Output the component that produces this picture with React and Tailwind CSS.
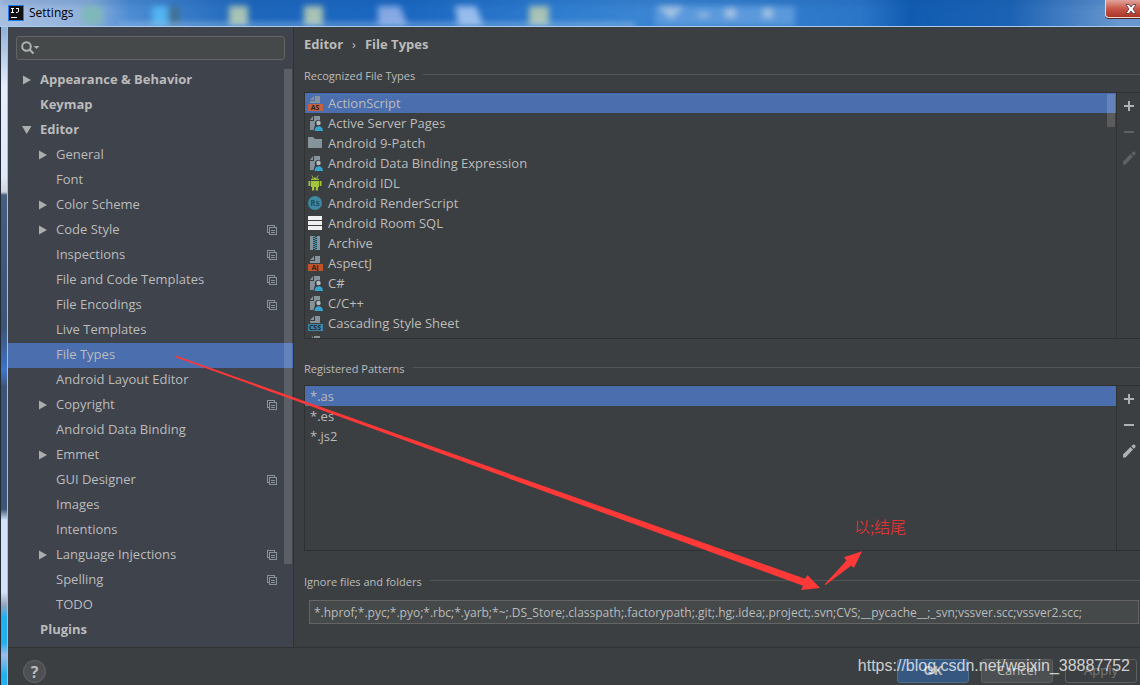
import React from 'react';

const navItems = [
    { label: 'Appearance & Behavior', top: true, arrow: 'right' },
    { label: 'Keymap', top: true },
    { label: 'Editor', top: true, arrow: 'down' },
    { label: 'General', arrow: 'right' },
    { label: 'Font' },
    { label: 'Color Scheme', arrow: 'right' },
    { label: 'Code Style', arrow: 'right', project: true },
    { label: 'Inspections', project: true },
    { label: 'File and Code Templates', project: true },
    { label: 'File Encodings', project: true },
    { label: 'Live Templates' },
    { label: 'File Types', selected: true },
    { label: 'Android Layout Editor' },
    { label: 'Copyright', arrow: 'right', project: true },
    { label: 'Android Data Binding' },
    { label: 'Emmet', arrow: 'right' },
    { label: 'GUI Designer', project: true },
    { label: 'Images' },
    { label: 'Intentions' },
    { label: 'Language Injections', arrow: 'right', project: true },
    { label: 'Spelling', project: true },
    { label: 'TODO' },
    { label: 'Plugins', top: true },
];

const fileTypes = [
    { name: 'ActionScript', icon: 'tag', tag: 'AS', color: '#c4623f' },
    { name: 'Active Server Pages', icon: 'user' },
    { name: 'Android 9-Patch', icon: 'folder' },
    { name: 'Android Data Binding Expression', icon: 'user' },
    { name: 'Android IDL', icon: 'android' },
    { name: 'Android RenderScript', icon: 'rs' },
    { name: 'Android Room SQL', icon: 'sql' },
    { name: 'Archive', icon: 'archive' },
    { name: 'AspectJ', icon: 'tag', tag: 'AJ', color: '#be5427' },
    { name: 'C#', icon: 'user' },
    { name: 'C/C++', icon: 'user' },
    { name: 'Cascading Style Sheet', icon: 'tag', tag: 'CSS', color: '#3688a8' },
    { name: '', icon: 'user' },
];

const patterns = ['*.as', '*.es', '*.js2'];

const Arrow = ({ dir }) => (
    <svg className="h-3 w-3 shrink-0" viewBox="0 0 12 12" fill="#adadad">
        {dir === 'right' && <path d="M3 1.500 L11 6 L3 10.500 Z" />}
        {dir === 'down' && <path d="M2 2 H11.500 L6.700 10 Z" />}
    </svg>
);

const ProjectIcon = () => (
    <svg className="h-[10px] w-[10px] shrink-0" viewBox="0 0 10 10" fill="none" stroke="#87939a" shapeRendering="crispEdges">
        <path d="M2 7.500 H0.500 V0.500 H7.500 V2" />
        <path d="M2.500 2.500 H9.500 V9.500 H2.500 Z M4 5.500 H8 M4 7.500 H8" />
    </svg>
);

const FileIcon = ({ type, tag, color }) => {
    if (type === 'folder') {
        return (
            <svg className="h-4 w-4 shrink-0" viewBox="0 0 16 16">
                <path d="M1 2 H6 L8 4 H15 V13 H1 Z" fill="#87939a" />
            </svg>
        );
    }
    if (type === 'android') {
        return (
            <svg className="h-4 w-4 shrink-0" viewBox="0 0 16 16" fill="#a4c439">
                <path d="M4 5 C4 1.500 12 1.500 12 5 Z M4 6 H12 V12 H4 Z M1.500 6 H3.300 V11 H1.500 Z M12.700 6 H14.500 V11 H12.700 Z M5 12 H7.200 V15.500 H5 Z M8.800 12 H11 V15.500 H8.800 Z" />
                <path d="M5 0.500 L6.200 3 M11 0.500 L9.800 3" stroke="#a4c439" strokeWidth="0.800" />
                <path d="M5.700 3.300 h1 v1 h-1 Z M9.300 3.300 h1 v1 h-1 Z" fill="#3c3f41" />
            </svg>
        );
    }
    if (type === 'rs') {
        return (
            <svg className="h-4 w-4 shrink-0" viewBox="0 0 16 16">
                <circle cx="8" cy="8" r="7" fill="#3d89a3" />
                <text x="8" y="11" textAnchor="middle" fontSize="8" fontWeight="bold" fontFamily="Open Sans, sans-serif" fill="#23505f">Rs</text>
            </svg>
        );
    }
    if (type === 'sql') {
        return (
            <svg className="h-4 w-4 shrink-0" viewBox="0 0 16 16" fill="#f0f0f0" shapeRendering="crispEdges">
                <path d="M1 1 H15 V5 H1 Z M1 6 H15 V10 H1 Z M1 11 H15 V15 H1 Z" />
            </svg>
        );
    }
    if (type === 'archive') {
        return (
            <svg className="h-4 w-4 shrink-0" viewBox="0 0 16 16" shapeRendering="crispEdges">
                <path d="M3 1 H6 V15 H3 Z M10 1 H13 V15 H10 Z" fill="#87939a" />
                <path d="M7 1 V15" stroke="#3e9dbf" strokeWidth="2" strokeDasharray="1 1" />
                <path d="M9 2 V15" stroke="#3e9dbf" strokeWidth="2" strokeDasharray="1 1" />
            </svg>
        );
    }
    if (type === 'user') {
        return (
            <svg className="h-4 w-4 shrink-0" viewBox="0 0 16 16">
                <path d="M7 1 H13 V5.500 A3.500 3.500 0 0 0 8 10 L6.500 15 H3 V6 H7 Z M6 1 V5 H3 Z" fill="#87939a" />
                <circle cx="11.500" cy="8" r="2.200" fill="#b3bac0" />
                <path d="M7.500 16 C7.500 9.500 16 9.500 16 16 Z" fill="#35a5d0" />
            </svg>
        );
    }
    return (
        <svg className="h-4 w-4 shrink-0" viewBox="0 0 16 16">
            <path d="M8 1 H13 V8 H3 V6 H8 Z M7 1 V5 H3 Z" fill="#87939a" />
            <path d="M1 9 H16 V16 H1 Z" fill={color} />
            <text x="8" y="15" textAnchor="middle" fontSize="7" fontWeight="bold" fontFamily="Open Sans, sans-serif" fill="#2e2320">{tag}</text>
        </svg>
    );
};

const SectionTitle = ({ children }) => (
    <div className="flex h-5 items-center gap-2 pl-2.5">
        <h2 className="text-[11px] leading-5">{children}</h2>
        <div className="mb-1 h-px flex-1 bg-[#515557]"></div>
    </div>
);

const Toolbar = ({ muted }) => {
    const color = muted ? 'text-[#5f6162]' : 'text-[#afb1b3]';
    return (
        <div className="flex w-[23px] shrink-0 flex-col pl-1">
            <button aria-label="Add" className="flex h-[26px] items-center text-[#afb1b3]">
                <svg className="h-4 w-4" viewBox="0 0 16 16" fill="currentColor">
                    <path d="M7 3 H9 V7 H13 V9 H9 V13 H7 V9 H3 V7 H7 Z" />
                </svg>
            </button>
            <button aria-label="Remove" className={`flex h-[26px] items-center ${color}`}>
                <svg className="h-4 w-4" viewBox="0 0 16 16" fill="currentColor">
                    <path d="M3 7 H13 V9 H3 Z" />
                </svg>
            </button>
            <button aria-label="Edit" className={`flex h-[26px] items-center ${color}`}>
                <svg className="h-4 w-4" viewBox="0 0 16 16" fill="currentColor">
                    <path d="M2 11.500 L9.500 4 L12 6.500 L4.500 14.500 H2 Z M10.300 3.200 L11.800 1.700 Q13 1 14 2 Q15 3 14.300 4.200 L12.800 5.700 Z" />
                </svg>
            </button>
        </div>
    );
};

const TitleBar = () => (
    <header className="relative flex h-[27px] shrink-0 items-start justify-between overflow-hidden border-b border-[#a9cbee] bg-[linear-gradient(90deg,#a9bfe0_0,#8fb0dc_90px,#4c8cd2_130px,#1d66bb_250px,#1a66c0_400px,#2f7dcf_560px,#3a84d2_640px,#2c76c8_860px,#115cb1_910px,#1c62b4_1010px,#6898cf_1120px)]">
        <svg className="absolute inset-0 h-full w-full blur-[3px]" aria-hidden="true">
            <path d="M120 26 H635" stroke="#cfe3f8" strokeWidth="4" />
            <path d="M0 0 H1140" stroke="#14509c" strokeWidth="5" opacity="0.500" />
            <path d="M82 6 H102 V24 H82 Z" fill="#7fb8b8" />
            <path d="M152 6 H168 V24 H152 Z" fill="#52b4f2" />
            <path d="M170 6 H179 V24 H170 Z" fill="#42708f" />
            <path d="M229 6 H248 V24 H229 Z M304 6 H323 V24 H304 Z M529 6 H549 V24 H529 Z" fill="#a9c3b4" />
            <path d="M378 6 H400 L407 24 H378 Z" fill="#86a9e4" />
            <path d="M455 6 H476 L483 24 H458 Z" fill="#98bcec" />
            <path d="M655 6 H795 V30 H655 Z" fill="#5b99dc" />
            <path d="M658 6 H684 L671 20 Z M698 13 H709 V17 H698 Z M725 8 H736 V18 H725 Z M763 8 H773 V18 H763 Z" fill="#a5c3e2" />
        </svg>
        <div className="relative flex items-center gap-[5px] pt-1 pl-2">
            <svg className="h-4 w-4" viewBox="0 0 16 16">
                <rect width="16" height="16" fill="#1b7bea" />
                <rect x="1" y="1" width="14" height="14" fill="#111" />
                <path d="M3 3.500 H6 M4.500 3 V8 M3 7.500 H6 M8 3.500 H11 M10.500 3 V6.500 Q10.500 7.500 8 7.500 M3 12.500 H9" stroke="#fff" fill="none" />
            </svg>
            <h1 className="text-xs leading-[18px] text-black">Settings</h1>
        </div>
        <button aria-label="Close" className="relative flex h-[18px] w-[35px] items-center justify-center rounded-bl border-b border-l border-[#f0d8d4] bg-linear-to-b from-[#dfa49c] via-[#c8584a] via-50% to-[#a93424] pl-4 shadow-[0_1px_0_#54262a]">
            <svg className="h-3 w-3" viewBox="0 0 12 12">
                <path d="M1 1.500 H4 L6 4 L8 1.500 H11 L8 6 L11 10.500 H8 L6 8 L4 10.500 H1 L4 6 Z" fill="#fff" stroke="#5a3238" strokeWidth="0.800" />
            </svg>
        </button>
    </header>
);

const Sidebar = () => (
    <nav className="relative w-[286px] shrink-0 border-r border-[#323232] bg-[#3f434c]">
        <div className="px-2 pt-[9px] pb-2">
            <div className="flex h-6 items-center rounded-[3px] border border-[#646464] bg-[#45494a] pl-1">
                <svg className="h-4 w-5 shrink-0" viewBox="0 0 20 16" fill="none" stroke="#afb1b3" strokeWidth="2">
                    <circle cx="5.500" cy="6.500" r="4.300" />
                    <path d="M8.500 9.500 L12.500 13.500" />
                    <path d="M12.500 6 H18.500 L15.500 9 Z" fill="#afb1b3" stroke="none" />
                </svg>
                <input aria-label="Search settings" className="w-full min-w-0 bg-transparent text-[13px] outline-none" />
            </div>
        </div>
        <ul>
            {navItems.map((item) => (
                <li key={item.label}>
                    <button className={`flex h-[25px] w-full items-center gap-2 pr-4 pb-0.5 text-left ${item.top ? 'pl-3 font-bold' : 'pl-7'} ${item.selected ? 'bg-[#4b6eaf]' : ''}`}>
                        <Arrow dir={item.arrow} />
                        <span className="flex-1">{item.label}</span>
                        {item.project && <ProjectIcon />}
                    </button>
                </li>
            ))}
        </ul>
        <div className="absolute top-[42px] right-px h-[495px] w-2 bg-white/15"></div>
    </nav>
);

const Annotations = () => (
    <div className="pointer-events-none absolute inset-0 overflow-hidden">
        <svg className="absolute top-0 left-0" width="1140" height="685" fill="#ff3838">
            <path d="M175.500 355.500 L805 578.700 L807.500 575 L820 588 L801 590 L803 585.700 L300 402.300 L175.500 357.200 Z" />
            <path d="M824.500 584.500 L846.500 560.500 L844 557.300 L862 551.300 L854 567.700 L851 565.700 L825.500 585 Z" />
        </svg>
        <p className="absolute top-[514px] left-[854px] font-['Noto_Sans_CJK_SC',sans-serif] text-base leading-6 font-light text-[#ff3030]">以;结尾</p>
        <p className="absolute top-[654px] right-[10px] font-['Liberation_Sans',Arial,sans-serif] text-base leading-6 text-white/75">https://blog.csdn.net/weixin_38887752</p>
    </div>
);

const App = () => {
    return (
        <div className="relative flex h-screen flex-col overflow-hidden bg-[#3c3f41] font-['Open_Sans',sans-serif] text-[13px] text-[#bbbbbb]">
            <TitleBar />
            <div className="flex min-h-0 flex-1">
                <div className="w-2 shrink-0 border-x border-l-[#222a38] border-r-[#aebccb] bg-[linear-gradient(#8fb0d8_0,#e6eefb_60px,#dfe9f8_150px,#d0d4dc_165px,#455d7e_168px,#3b5577_300px,#3f74c8_344px,#3b5577_360px,#3b5577_482px,#d4e2fb_493px,#d4e2fb_565px,#96a5bd_578px,#22b0ee_590px,#22b0ee_616px,#a0bce6_628px,#22b0ee_648px)]"></div>
                <div className="flex min-w-0 flex-1 flex-col">
                    <div className="flex min-h-0 flex-1">
                        <Sidebar />
                        <main className="flex min-w-0 flex-1 flex-col">
                            <div className="flex h-[35px] items-center gap-[9px] pl-2.5 font-bold">
                                <span>Editor</span>
                                <span className="font-normal">›</span>
                                <span>File Types</span>
                            </div>
                            <div className="mt-1 flex min-h-0 flex-1 flex-col gap-1.5">
                                <SectionTitle>Recognized File Types</SectionTitle>
                                <div className="ml-2.5 flex min-h-0 flex-1 border-y border-l border-[#2f3133]">
                                    <div className="relative min-w-0 flex-1 overflow-hidden border-r border-[#2f3133]">
                                        <ul>
                                            {fileTypes.map((file, index) => (
                                                <li key={index} className={`flex h-5 items-center gap-[5px] pl-0.5 ${index === 0 ? 'bg-[#4b6eaf]' : ''}`}>
                                                    <FileIcon type={file.icon} tag={file.tag} color={file.color} />
                                                    <span className="leading-5">{file.name}</span>
                                                </li>
                                            ))}
                                        </ul>
                                        <div className="absolute top-px right-px h-[33px] w-2 bg-white/15"></div>
                                    </div>
                                    <Toolbar muted />
                                </div>
                            </div>
                            <div className="mt-5 flex flex-col gap-1.5">
                                <SectionTitle>Registered Patterns</SectionTitle>
                                <div className="ml-2.5 flex h-[166px] border-y border-l border-[#2f3133]">
                                    <ul className="min-w-0 flex-1 border-r border-[#2f3133]">
                                        {patterns.map((pattern, index) => (
                                            <li key={pattern} className={`h-5 pl-[5px] leading-5 ${index === 0 ? 'bg-[#4b6eaf]' : ''}`}>{pattern}</li>
                                        ))}
                                    </ul>
                                    <Toolbar />
                                </div>
                            </div>
                            <div className="mt-[21px] mb-[23px] flex flex-col gap-2">
                                <SectionTitle>Ignore files and folders</SectionTitle>
                                <input
                                    aria-label="Ignore files and folders"
                                    className="mr-px ml-[15px] h-6 border border-[#646464] bg-[#45494a] px-1 text-xs outline-none"
                                    defaultValue="*.hprof;*.pyc;*.pyo;*.rbc;*.yarb;*~;.DS_Store;.classpath;.factorypath;.git;.hg;.idea;.project;.svn;CVS;__pycache__;_svn;vssver.scc;vssver2.scc;"
                                />
                            </div>
                        </main>
                    </div>
                    <footer className="flex h-[38px] shrink-0 items-start justify-between border-t border-[#2f3133] pr-[3px] pl-[15px]">
                        <button aria-label="Help" className="mt-3 h-[23px] w-[23px] rounded-full border border-[#646769] bg-[#4c5052] text-base leading-5 font-bold">?</button>
                        <div className="mt-[11px] flex gap-3">
                            <button className="h-6 w-[72px] rounded-[3px] border border-[#4c708c] bg-[#365880] font-bold">OK</button>
                            <button className="h-6 w-[72px] rounded-[3px] border border-[#5e6060] bg-[#4c5052]">Cancel</button>
                            <button disabled className="h-6 w-[72px] rounded-[3px] border border-[#5e6060] text-[#777777]">Apply</button>
                        </div>
                    </footer>
                </div>
            </div>
            <Annotations />
        </div>
    );
};

export default App;
